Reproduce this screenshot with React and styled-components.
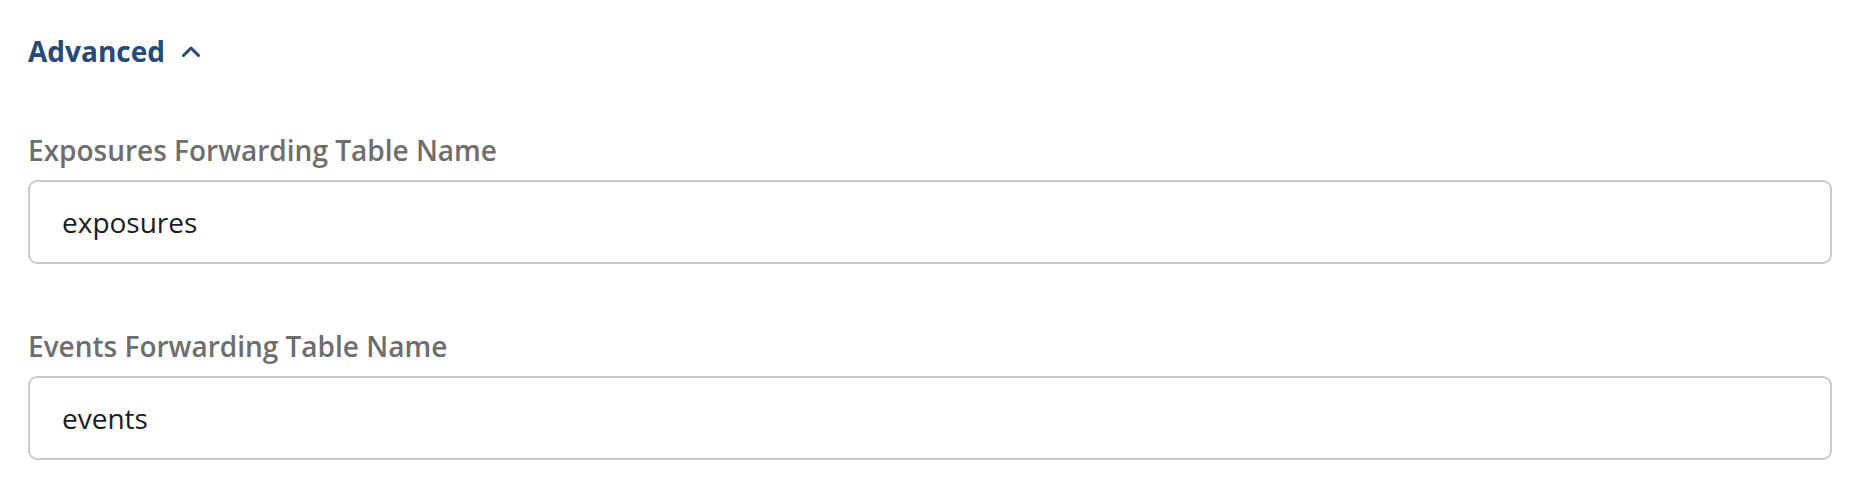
import React from "react";
import styled, { createGlobalStyle } from "styled-components";

const Global = createGlobalStyle`
  html, body { margin: 0; padding: 0; background: #ffffff; }
  body { font-family: "Open Sans", "Noto Sans", sans-serif; }
  * { box-sizing: border-box; }
`;

const Page = styled.div`
  padding: 30px 42px 0 28px;
  display: flex;
  flex-direction: column;
`;

const Toggle = styled.button`
  display: flex;
  align-items: center;
  gap: 17px;
  background: none;
  border: none;
  padding: 0;
  margin: 0 0 59px 0;
  cursor: pointer;
  align-self: flex-start;
  font-family: inherit;
  font-size: 28px;
  font-weight: 700;
  line-height: 42px;
  color: #264a7a;
`;

const Fields = styled.div`
  display: flex;
  flex-direction: column;
  gap: 63px;
`;

const Field = styled.div`
  display: flex;
  flex-direction: column;
  gap: 11px;
`;

const Label = styled.label`
  font-size: 28px;
  font-weight: 600;
  line-height: 38px;
  color: #6e6e6e;
`;

const Input = styled.input`
  height: 84px;
  width: 100%;
  border: 2px solid #cbcbcb;
  border-radius: 9px;
  padding: 0 32px;
  font-family: inherit;
  font-size: 28px;
  color: #1c1c1c;
  background: #fff;
  outline: none;
`;

const Chevron = () => (
  <svg width="18" height="11" viewBox="0 0 18 11" fill="none">
    <polyline points="1.5,9.5 9,2 16.5,9.5" stroke="#264a7a" strokeWidth="3" strokeLinecap="round" strokeLinejoin="round" />
  </svg>
);

export default function App() {
  return (
    <>
      <Global />
      <Page>
        <Toggle type="button">
          Advanced
          <Chevron />
        </Toggle>
        <Fields>
          <Field>
            <Label>Exposures Forwarding Table Name</Label>
            <Input defaultValue="exposures" />
          </Field>
          <Field>
            <Label>Events Forwarding Table Name</Label>
            <Input defaultValue="events" />
          </Field>
        </Fields>
      </Page>
    </>
  );
}
